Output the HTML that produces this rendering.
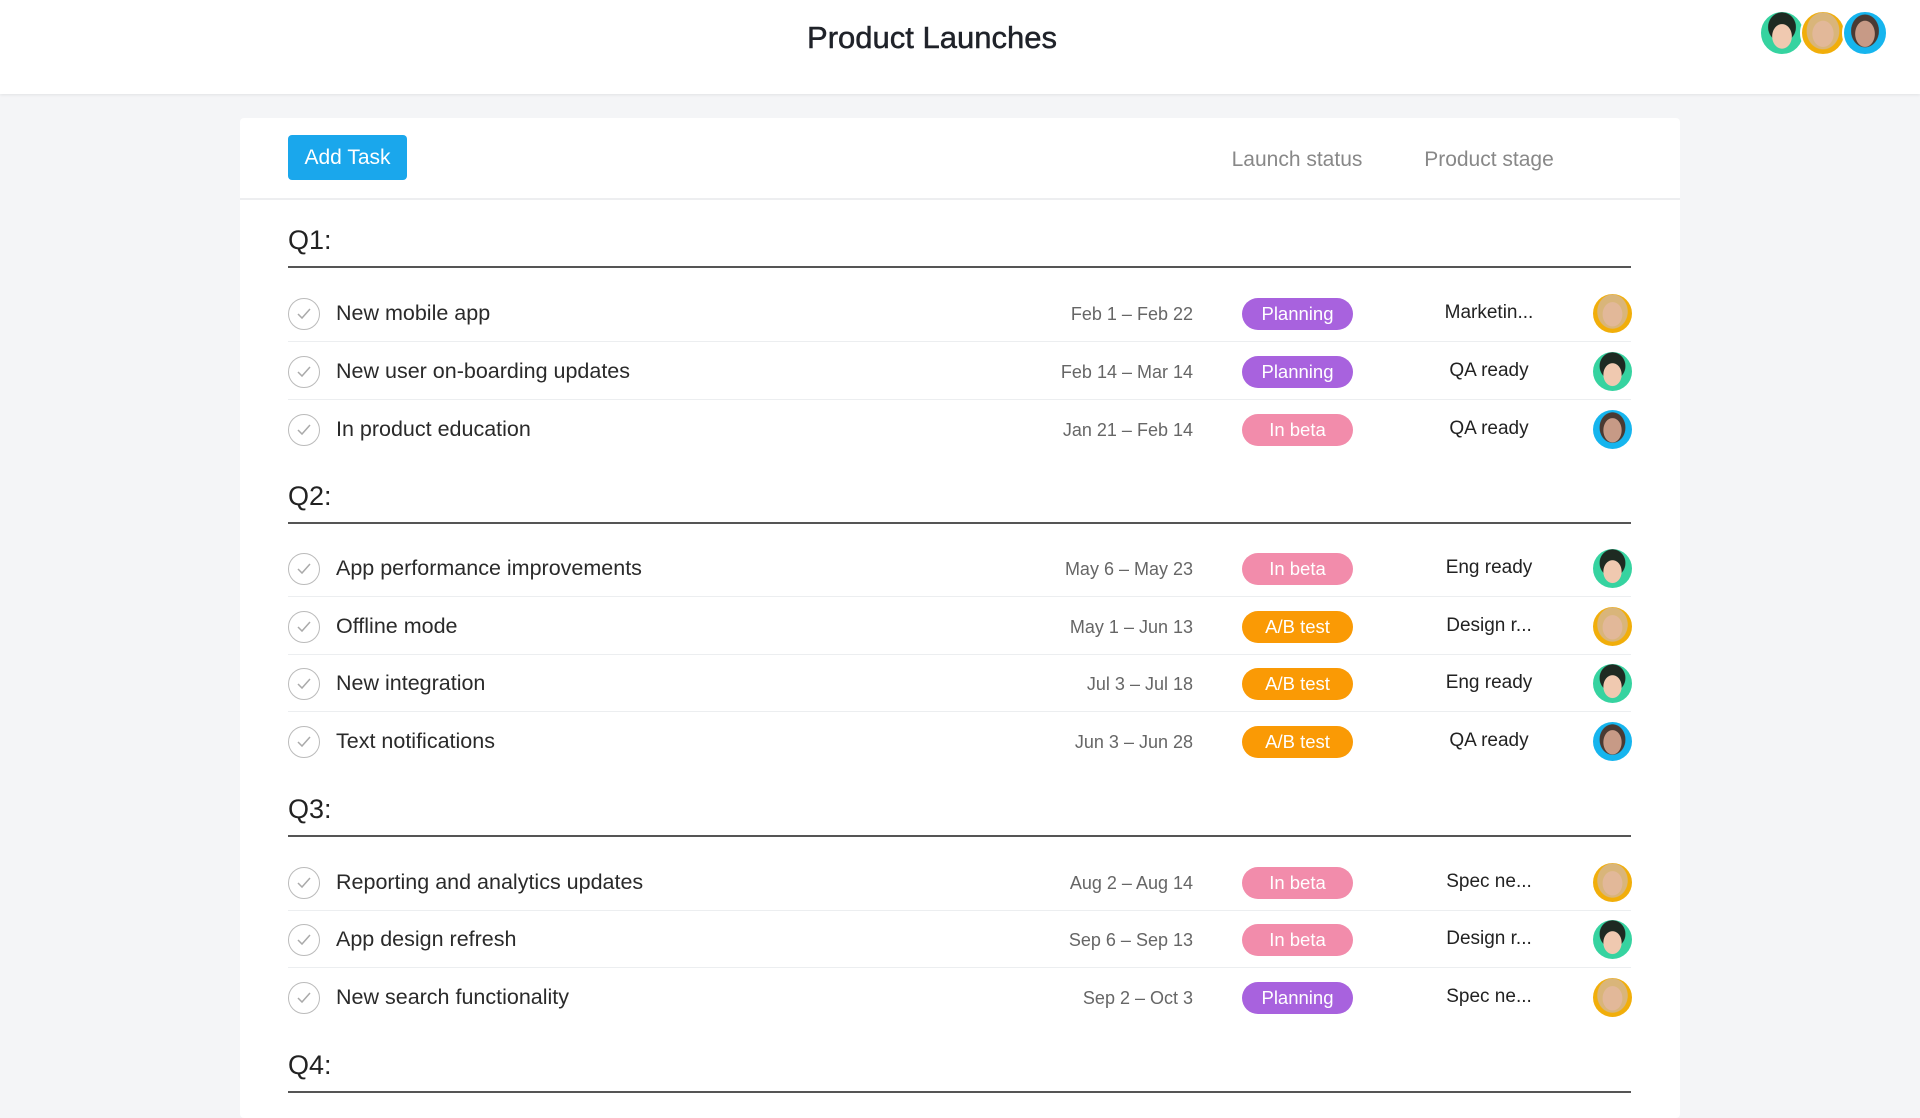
<!DOCTYPE html>
<html><head><meta charset="utf-8"><style>
*{margin:0;padding:0;box-sizing:border-box}
body{width:1920px;height:1101px;overflow:hidden;background:#f4f5f7;font-family:"Liberation Sans",sans-serif;position:relative;color:#222}
.hdr{position:absolute;left:0;top:0;width:1920px;height:94px;background:#fff;box-shadow:0 1px 3px rgba(0,0,0,.08)}
.title{position:absolute;left:0;width:1864px;top:20px;text-align:center;font-size:31px;color:#1f2229;-webkit-text-stroke:0.5px #1f2229}
.av{position:absolute;border-radius:50%;overflow:hidden}
.card{position:absolute;left:240px;top:118px;width:1440px;height:1000px;background:#fff;border-radius:4px}
.btn{position:absolute;left:48px;top:17px;width:119px;height:45px;background:#1aa7ec;color:#fff;border-radius:4px;font-size:21px;line-height:45px;text-align:center}
.col{position:absolute;top:30px;font-size:21px;color:#888;transform:translateX(-50%);white-space:nowrap}
.tdiv{position:absolute;left:0;top:80px;width:1440px;height:2px;background:#edeef0}
.q{position:absolute;left:48px;font-size:27px;color:#222}
.ql{position:absolute;left:48px;width:1343px;height:2px;background:#555}
.row{position:absolute;left:48px;width:1343px;height:57px}
.row .sep{position:absolute;left:0;right:0;bottom:0;height:1px;background:#eceef0}
.chk{position:absolute;left:0;top:13px;width:32px;height:32px;border:1.5px solid #bbb;border-radius:50%}
.chk svg{position:absolute;left:8px;top:9px}
.nm{position:absolute;left:48px;top:16px;font-size:21.5px;color:#2a2a2a}
.dt{position:absolute;right:438px;top:19px;font-size:18px;color:#666}
.pill{position:absolute;left:954px;top:13px;width:111px;height:32px;border-radius:16px;color:#fff;font-size:18.5px;line-height:32px;text-align:center}
.pl{background:#a862de}.ib{background:#f28cab}.ab{background:#fa9a05}
.st{position:absolute;left:1201px;width:200px;margin-left:-100px;top:17px;font-size:19px;color:#222;text-align:center}
.ra{position:absolute;left:1305px;top:9px;width:39px;height:39px;border-radius:50%}
.y{background:radial-gradient(ellipse 26% 32% at 50% 52%,#e2b899 0 95%,transparent 100%),radial-gradient(ellipse 40% 45% at 50% 45%,#d9b57a 0 95%,transparent 100%),#f1ae0a}
.g{background:radial-gradient(ellipse 24% 30% at 50% 58%,#f0c9b0 0 95%,transparent 100%),radial-gradient(ellipse 34% 36% at 50% 36%,#1e2a22 0 95%,transparent 100%),#36d3a0}
.b{background:radial-gradient(ellipse 24% 32% at 50% 52%,#c79a86 0 95%,transparent 100%),radial-gradient(ellipse 34% 40% at 50% 45%,#4a3a33 0 95%,transparent 100%),#16b5ee}
</style></head><body>
<div class="hdr"><div class="title">Product Launches</div>
<div class="av g" style="left:1759px;top:10px;width:46px;height:46px;border:2px solid #fff"></div>
<div class="av y" style="left:1800px;top:10px;width:46px;height:46px;border:2px solid #fff"></div>
<div class="av b" style="left:1842px;top:10px;width:46px;height:46px;border:2px solid #fff"></div>
</div>
<div class="card">
<div class="btn">Add Task</div>
<div class="col" style="left:1057px">Launch status</div>
<div class="col" style="left:1249px">Product stage</div>
<div class="tdiv"></div>

<div class="q" style="top:107px">Q1:</div><div class="ql" style="top:148px"></div>
<div class="row" style="top:167px"><div class="chk"><svg width="14" height="12"><path d="M1 6 L5 10 L13 1" fill="none" stroke="#aaa" stroke-width="1.5"/></svg></div><div class="nm">New mobile app</div><div class="dt">Feb 1 – Feb 22</div><div class="pill pl">Planning</div><div class="st">Marketin...</div><div class="ra y"></div><div class="sep"></div></div>
<div class="row" style="top:225px"><div class="chk"><svg width="14" height="12"><path d="M1 6 L5 10 L13 1" fill="none" stroke="#aaa" stroke-width="1.5"/></svg></div><div class="nm">New user on-boarding updates</div><div class="dt">Feb 14 – Mar 14</div><div class="pill pl">Planning</div><div class="st">QA ready</div><div class="ra g"></div><div class="sep"></div></div>
<div class="row" style="top:283px"><div class="chk"><svg width="14" height="12"><path d="M1 6 L5 10 L13 1" fill="none" stroke="#aaa" stroke-width="1.5"/></svg></div><div class="nm">In product education</div><div class="dt">Jan 21 – Feb 14</div><div class="pill ib">In beta</div><div class="st">QA ready</div><div class="ra b"></div></div>

<div class="q" style="top:363px">Q2:</div><div class="ql" style="top:404px"></div>
<div class="row" style="top:422px"><div class="chk"><svg width="14" height="12"><path d="M1 6 L5 10 L13 1" fill="none" stroke="#aaa" stroke-width="1.5"/></svg></div><div class="nm">App performance improvements</div><div class="dt">May 6 – May 23</div><div class="pill ib">In beta</div><div class="st">Eng ready</div><div class="ra g"></div><div class="sep"></div></div>
<div class="row" style="top:480px"><div class="chk"><svg width="14" height="12"><path d="M1 6 L5 10 L13 1" fill="none" stroke="#aaa" stroke-width="1.5"/></svg></div><div class="nm">Offline mode</div><div class="dt">May 1 – Jun 13</div><div class="pill ab">A/B test</div><div class="st">Design r...</div><div class="ra y"></div><div class="sep"></div></div>
<div class="row" style="top:537px"><div class="chk"><svg width="14" height="12"><path d="M1 6 L5 10 L13 1" fill="none" stroke="#aaa" stroke-width="1.5"/></svg></div><div class="nm">New integration</div><div class="dt">Jul 3 – Jul 18</div><div class="pill ab">A/B test</div><div class="st">Eng ready</div><div class="ra g"></div><div class="sep"></div></div>
<div class="row" style="top:595px"><div class="chk"><svg width="14" height="12"><path d="M1 6 L5 10 L13 1" fill="none" stroke="#aaa" stroke-width="1.5"/></svg></div><div class="nm">Text notifications</div><div class="dt">Jun 3 – Jun 28</div><div class="pill ab">A/B test</div><div class="st">QA ready</div><div class="ra b"></div></div>

<div class="q" style="top:676px">Q3:</div><div class="ql" style="top:717px"></div>
<div class="row" style="top:736px"><div class="chk"><svg width="14" height="12"><path d="M1 6 L5 10 L13 1" fill="none" stroke="#aaa" stroke-width="1.5"/></svg></div><div class="nm">Reporting and analytics updates</div><div class="dt">Aug 2 – Aug 14</div><div class="pill ib">In beta</div><div class="st">Spec ne...</div><div class="ra y"></div><div class="sep"></div></div>
<div class="row" style="top:793px"><div class="chk"><svg width="14" height="12"><path d="M1 6 L5 10 L13 1" fill="none" stroke="#aaa" stroke-width="1.5"/></svg></div><div class="nm">App design refresh</div><div class="dt">Sep 6 – Sep 13</div><div class="pill ib">In beta</div><div class="st">Design r...</div><div class="ra g"></div><div class="sep"></div></div>
<div class="row" style="top:851px"><div class="chk"><svg width="14" height="12"><path d="M1 6 L5 10 L13 1" fill="none" stroke="#aaa" stroke-width="1.5"/></svg></div><div class="nm">New search functionality</div><div class="dt">Sep 2 – Oct 3</div><div class="pill pl">Planning</div><div class="st">Spec ne...</div><div class="ra y"></div></div>

<div class="q" style="top:932px">Q4:</div><div class="ql" style="top:973px"></div>
</div>
</body></html>
